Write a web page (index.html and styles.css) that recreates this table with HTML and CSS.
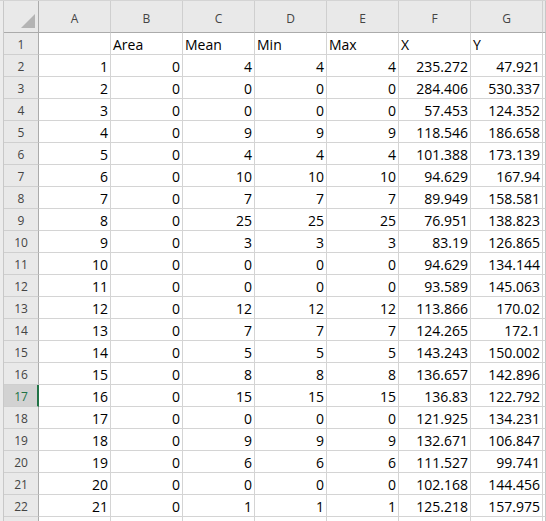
FILE: index.html
```html
<!DOCTYPE html>
<html>
<head>
<meta charset="utf-8">
<link rel="stylesheet" href="styles.css">
</head>
<body>
<div class="window">
  <div class="sheet" id="sheet">
    <div class="corner"><svg width="34" height="31" viewBox="0 0 34 31"><polygon points="17,27 31,27 31,13" fill="#b4b4b4"/></svg></div>
    <div class="ch">A</div><div class="ch">B</div><div class="ch">C</div><div class="ch">D</div><div class="ch">E</div><div class="ch">F</div><div class="ch">G</div><div class="ch edge"></div>

    <div class="rh">1</div><div class="c"></div><div class="c l">Area</div><div class="c l">Mean</div><div class="c l">Min</div><div class="c l">Max</div><div class="c l">X</div><div class="c l">Y</div><div class="c edge"></div>
    <div class="rh">2</div><div class="c">1</div><div class="c">0</div><div class="c">4</div><div class="c">4</div><div class="c">4</div><div class="c">235.272</div><div class="c">47.921</div><div class="c edge"></div>
    <div class="rh">3</div><div class="c">2</div><div class="c">0</div><div class="c">0</div><div class="c">0</div><div class="c">0</div><div class="c">284.406</div><div class="c">530.337</div><div class="c edge"></div>
    <div class="rh">4</div><div class="c">3</div><div class="c">0</div><div class="c">0</div><div class="c">0</div><div class="c">0</div><div class="c">57.453</div><div class="c">124.352</div><div class="c edge"></div>
    <div class="rh">5</div><div class="c">4</div><div class="c">0</div><div class="c">9</div><div class="c">9</div><div class="c">9</div><div class="c">118.546</div><div class="c">186.658</div><div class="c edge"></div>
    <div class="rh">6</div><div class="c">5</div><div class="c">0</div><div class="c">4</div><div class="c">4</div><div class="c">4</div><div class="c">101.388</div><div class="c">173.139</div><div class="c edge"></div>
    <div class="rh">7</div><div class="c">6</div><div class="c">0</div><div class="c">10</div><div class="c">10</div><div class="c">10</div><div class="c">94.629</div><div class="c">167.94</div><div class="c edge"></div>
    <div class="rh">8</div><div class="c">7</div><div class="c">0</div><div class="c">7</div><div class="c">7</div><div class="c">7</div><div class="c">89.949</div><div class="c">158.581</div><div class="c edge"></div>
    <div class="rh">9</div><div class="c">8</div><div class="c">0</div><div class="c">25</div><div class="c">25</div><div class="c">25</div><div class="c">76.951</div><div class="c">138.823</div><div class="c edge"></div>
    <div class="rh">10</div><div class="c">9</div><div class="c">0</div><div class="c">3</div><div class="c">3</div><div class="c">3</div><div class="c">83.19</div><div class="c">126.865</div><div class="c edge"></div>
    <div class="rh">11</div><div class="c">10</div><div class="c">0</div><div class="c">0</div><div class="c">0</div><div class="c">0</div><div class="c">94.629</div><div class="c">134.144</div><div class="c edge"></div>
    <div class="rh">12</div><div class="c">11</div><div class="c">0</div><div class="c">0</div><div class="c">0</div><div class="c">0</div><div class="c">93.589</div><div class="c">145.063</div><div class="c edge"></div>
    <div class="rh">13</div><div class="c">12</div><div class="c">0</div><div class="c">12</div><div class="c">12</div><div class="c">12</div><div class="c">113.866</div><div class="c">170.02</div><div class="c edge"></div>
    <div class="rh">14</div><div class="c">13</div><div class="c">0</div><div class="c">7</div><div class="c">7</div><div class="c">7</div><div class="c">124.265</div><div class="c">172.1</div><div class="c edge"></div>
    <div class="rh">15</div><div class="c">14</div><div class="c">0</div><div class="c">5</div><div class="c">5</div><div class="c">5</div><div class="c">143.243</div><div class="c">150.002</div><div class="c edge"></div>
    <div class="rh">16</div><div class="c">15</div><div class="c">0</div><div class="c">8</div><div class="c">8</div><div class="c">8</div><div class="c">136.657</div><div class="c">142.896</div><div class="c edge"></div>
    <div class="rh sel">17</div><div class="c">16</div><div class="c">0</div><div class="c">15</div><div class="c">15</div><div class="c">15</div><div class="c">136.83</div><div class="c">122.792</div><div class="c edge"></div>
    <div class="rh">18</div><div class="c">17</div><div class="c">0</div><div class="c">0</div><div class="c">0</div><div class="c">0</div><div class="c">121.925</div><div class="c">134.231</div><div class="c edge"></div>
    <div class="rh">19</div><div class="c">18</div><div class="c">0</div><div class="c">9</div><div class="c">9</div><div class="c">9</div><div class="c">132.671</div><div class="c">106.847</div><div class="c edge"></div>
    <div class="rh">20</div><div class="c">19</div><div class="c">0</div><div class="c">6</div><div class="c">6</div><div class="c">6</div><div class="c">111.527</div><div class="c">99.741</div><div class="c edge"></div>
    <div class="rh">21</div><div class="c">20</div><div class="c">0</div><div class="c">0</div><div class="c">0</div><div class="c">0</div><div class="c">102.168</div><div class="c">144.456</div><div class="c edge"></div>
    <div class="rh">22</div><div class="c">21</div><div class="c">0</div><div class="c">1</div><div class="c">1</div><div class="c">1</div><div class="c">125.218</div><div class="c">157.975</div><div class="c edge"></div>
    <div class="rh"></div><div class="c"></div><div class="c"></div><div class="c"></div><div class="c"></div><div class="c"></div><div class="c"></div><div class="c"></div><div class="c edge"></div>
  </div>
</div>
</body>
</html>
```
FILE: styles.css
```css
html, body {
  margin: 0;
  padding: 0;
  background: #ffffff;
  overflow: hidden;
}
.window {
  border-top: 1px solid #d4d4d4;
  padding-left: 3px;
  background: #ececec;
  width: 543px;
}
.sheet {
  display: grid;
  grid-template-columns: 35px repeat(7, 72px) 3px;
  grid-template-rows: 32px;
  grid-auto-rows: 22px;
  border-left: 1px solid #c8c8c8;
  background: #ffffff;
  font-family: "Open Sans", "Noto Sans", sans-serif;
}
.sheet > div {
  box-sizing: border-box;
  border-right: 1px solid #d4d4d4;
  border-bottom: 1px solid #d4d4d4;
  overflow: hidden;
  white-space: nowrap;
}
.corner {
  background: #e9e9e9;
  border-right-color: #ababab !important;
  border-bottom-color: #ababab !important;
}
.corner svg {
  display: block;
}
.ch {
  background: #e9e9e9;
  border-right-color: #cfcfcf !important;
  border-bottom-color: #ababab !important;
  color: #444444;
  font-size: 12px;
  text-align: center;
  line-height: 31px;
  padding-top: 2px;
}
.ch.edge {
  border-right-color: #c8c8c8 !important;
}
.rh {
  background: #e9e9e9;
  border-right-color: #ababab !important;
  border-bottom-color: #cfcfcf !important;
  color: #444444;
  font-size: 12px;
  text-align: center;
  line-height: 21px;
  padding-top: 1px;
}
.rh.sel {
  background: #d2d2d2;
  color: #217346;
  border-right: 2px solid #217346 !important;
  padding-left: 1px;
}
.c {
  color: #000000;
  font-size: 14px;
  text-align: right;
  line-height: 21px;
  padding: 1px 2px 0 2px;
}
.c.l {
  text-align: left;
}
.c.edge {
  padding: 0;
  border-right-color: #c8c8c8;
}
```
